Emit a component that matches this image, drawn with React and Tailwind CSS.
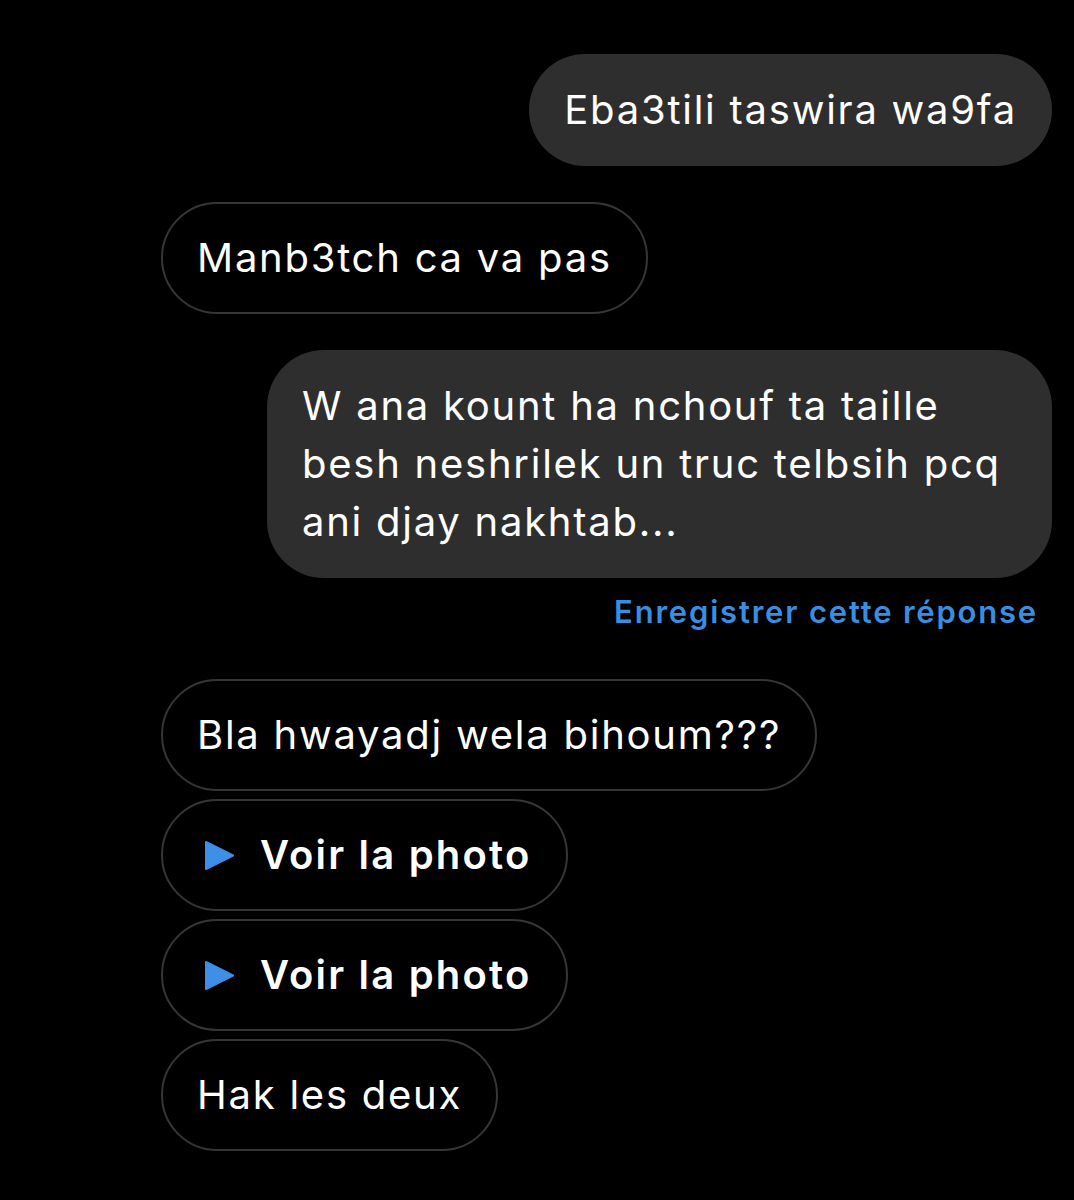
const font = { fontFamily: "Inter, 'Liberation Sans', sans-serif" };

function Outgoing({ children, className = "" }) {
  return (
    <div
      className={`rounded-[57px] bg-[#2e2e2e] px-[35px] py-[27px] text-[40px] leading-[58px] tracking-[1.75px] text-white ${className}`}
    >
      {children}
    </div>
  );
}

function Incoming({ children, className = "" }) {
  return (
    <div
      className={`rounded-[57px] border-2 border-[#363636] px-[34px] py-[25px] text-[40px] leading-[58px] tracking-[1.75px] text-white ${className}`}
    >
      {children}
    </div>
  );
}

function PhotoBubble() {
  return (
    <Incoming className="flex items-center gap-[26px] !pl-[42px]">
      <svg width="29" height="31" viewBox="0 0 29 31" className="shrink-0">
        <path d="M1 2 L28 15.5 L1 29 Z" fill="#3d8fe8" stroke="#3d8fe8" strokeWidth="2" strokeLinejoin="round" />
      </svg>
      <span className="font-semibold tracking-[2.2px]">Voir la photo</span>
    </Incoming>
  );
}

export default function App() {
  return (
    <div className="min-h-[1200px] w-[1074px] overflow-hidden bg-black" style={font}>
      <div className="flex flex-col pl-[161px] pr-[22px] pt-[54px]">
        <div className="flex justify-end">
          <Outgoing>Eba3tili taswira wa9fa</Outgoing>
        </div>

        <div className="mt-[36px] flex justify-start">
          <Incoming>Manb3tch ca va pas</Incoming>
        </div>

        <div className="mt-[36px] flex justify-end">
          <Outgoing className="w-[785px]">
            W ana kount ha nchouf ta taille
            <br />
            besh neshrilek un truc telbsih pcq
            <br />
            ani djay nakhtab...
          </Outgoing>
        </div>
        <div className="mt-[12px] flex justify-end pr-[14px]">
          <span className="text-[31px] font-semibold leading-[44px] tracking-[1.8px] text-[#3a8ee2]">
            Enregistrer cette réponse
          </span>
        </div>

        <div className="mt-[45px] flex flex-col items-start gap-[8px]">
          <Incoming>Bla hwayadj wela bihoum???</Incoming>
          <PhotoBubble />
          <PhotoBubble />
          <Incoming>Hak les deux</Incoming>
        </div>
      </div>
    </div>
  );
}
